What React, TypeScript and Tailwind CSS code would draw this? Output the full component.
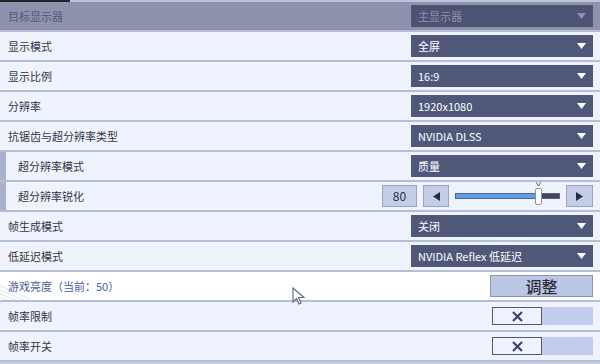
import React from 'react';

const FONT = { fontFamily: '"Noto Sans CJK SC", "Noto Sans", sans-serif' };

const Caret = ({ color = '#ffffff' }: { color?: string }) => (
  <svg width="9" height="6" viewBox="0 0 9 6">
    <polygon points="0,0 9,0 4.5,6" fill={color} />
  </svg>
);

const Select = ({ value, disabled = false }: { value: string; disabled?: boolean }) => (
  <div
    className={`w-[182px] h-[22px] flex items-center justify-between pl-[7px] pr-[7px] text-[11px] ${
      disabled ? 'bg-[#4d5374] text-[#8c90ab]' : 'bg-[#50587a] text-white'
    }`}
  >
    <span>{value}</span>
    <Caret color={disabled ? '#8c90ab' : '#ffffff'} />
  </div>
);

const Row = ({
  label,
  children,
  indent = false,
  variant = 'default',
}: {
  label: string;
  children?: React.ReactNode;
  indent?: boolean;
  variant?: 'default' | 'disabled' | 'highlight';
}) => {
  const bg =
    variant === 'disabled' ? 'bg-[#8e92ac]' : variant === 'highlight' ? 'bg-white' : 'bg-[#eef3fd]';
  const text =
    variant === 'disabled' ? 'text-[#565a7a]' : variant === 'highlight' ? 'text-[#4d5c9c]' : 'text-[#34363f]';
  return (
    <div className="flex h-[30px] border-b-2 border-[#b6bed6]">
      {indent && <div className="w-[6px] bg-[#a9b1cd]" />}
      <div
        className={`relative flex-1 flex items-center justify-between pr-[7px] ${bg} ${
          indent ? 'pl-[12px]' : 'pl-[8px]'
        }`}
      >
        {variant === 'highlight' && (
          <svg className="absolute left-0 top-0" width="30" height="28" viewBox="0 0 30 28">
            <path d="M0 18 L24 28 M0 22 L16 28 M0 26 L8 28 M0 14 L30 27" stroke="#dfe4f2" strokeWidth="1" />
          </svg>
        )}
        <span className={`relative text-[11px] ${text}`}>{label}</span>
        {children}
      </div>
    </div>
  );
};

const Toggle = () => (
  <div className="flex h-[18px] w-[101px]">
    <div className="w-[50px] h-full border border-[#50587a] bg-[#eef3fd] flex items-center justify-center">
      <svg width="11" height="11" viewBox="0 0 11 11">
        <path d="M1 1 L10 10 M10 1 L1 10" stroke="#3b4372" strokeWidth="2.2" />
      </svg>
    </div>
    <div className="flex-1 bg-[#c2ccec]" />
  </div>
);

const Slider = ({ value }: { value: number }) => (
  <div className="flex items-center gap-[6px]">
    <div className="w-[35px] h-[22px] bg-[#c4cde8] border border-[#9aa4c0] flex items-center justify-center text-[12px] text-[#2c2e38]">
      {value}
    </div>
    <div className="w-[26px] h-[22px] bg-[#c4cde8] border border-[#9aa4c0] flex items-center justify-center">
      <svg width="7" height="9" viewBox="0 0 7 9">
        <polygon points="7,0 7,9 0,4.5" fill="#2a2d3c" />
      </svg>
    </div>
    <div className="relative w-[105px] h-[22px] flex items-center">
      <div className="w-full h-[6px] bg-[#40465e] border border-[#5c6380] flex">
        <div className="h-full bg-[#5fa0ea]" style={{ width: `${value}%` }} />
      </div>
      <div className="absolute left-[80px] top-[3px] w-[7px] h-[17px] bg-white border border-[#8a90a8] rounded-[2px]" />
      <svg className="absolute left-[81px] top-[-3px]" width="5" height="4" viewBox="0 0 5 4">
        <path d="M0 0 L2.5 4 L5 0" stroke="#5a6078" strokeWidth="1" fill="none" />
      </svg>
    </div>
    <div className="w-[27px] h-[22px] bg-[#c4cde8] border border-[#9aa4c0] flex items-center justify-center">
      <svg width="7" height="9" viewBox="0 0 7 9">
        <polygon points="0,0 0,9 7,4.5" fill="#2a2d3c" />
      </svg>
    </div>
  </div>
);

export default function App() {
  return (
    <div className="relative w-[600px] h-[364px] overflow-hidden bg-[#c8d0e6]" style={FONT}>
      <div className="flex h-[2px]">
        <div className="w-[70px] bg-[#23242c]" />
        <div className="flex-1 bg-[#bcc4dc]" />
      </div>
      <Row label="目标显示器" variant="disabled">
        <Select value="主显示器" disabled />
      </Row>
      <Row label="显示模式">
        <Select value="全屏" />
      </Row>
      <Row label="显示比例">
        <Select value="16:9" />
      </Row>
      <Row label="分辨率">
        <Select value="1920x1080" />
      </Row>
      <Row label="抗锯齿与超分辨率类型">
        <Select value="NVIDIA DLSS" />
      </Row>
      <Row label="超分辨率模式" indent>
        <Select value="质量" />
      </Row>
      <Row label="超分辨率锐化" indent>
        <Slider value={80} />
      </Row>
      <Row label="帧生成模式">
        <Select value="关闭" />
      </Row>
      <Row label="低延迟模式">
        <Select value="NVIDIA Reflex 低延迟" />
      </Row>
      <Row label="游戏亮度（当前：50）" variant="highlight">
        <button className="w-[103px] h-[22px] bg-[#bcc7e6] border border-[#8a94b4] text-[16px] text-[#2e3038] font-medium flex items-center justify-center">
          调整
        </button>
      </Row>
      <Row label="帧率限制">
        <Toggle />
      </Row>
      <Row label="帧率开关">
        <Toggle />
      </Row>

      {/* mouse pointer */}
      <svg className="absolute left-[292px] top-[287px]" width="14" height="18" viewBox="0 0 14 18">
        <path
          d="M1 1 L1 15 L4.5 11.5 L7 17 L9 16 L6.5 10.5 L12 10.5 Z"
          fill="#ffffff"
          stroke="#6a6e7e"
          strokeWidth="1.2"
        />
      </svg>
    </div>
  );
}
